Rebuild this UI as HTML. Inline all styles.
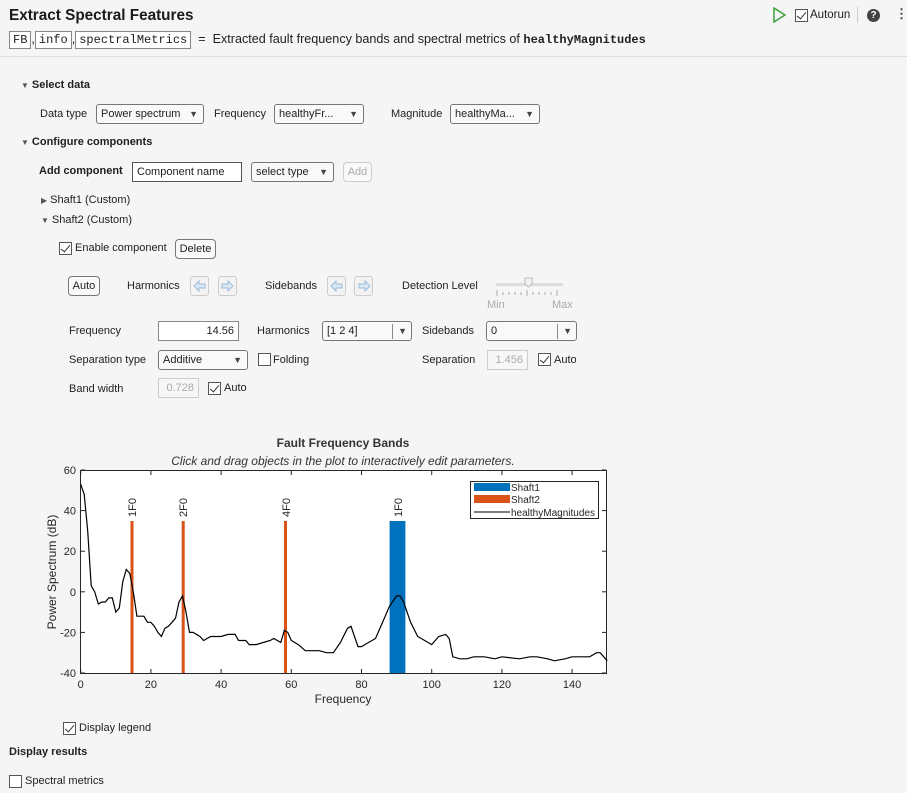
<!DOCTYPE html>
<html><head><meta charset="utf-8"><style>
*{box-sizing:border-box}
body{margin:0;width:907px;height:793px;background:#f5f5f5;font-family:"Liberation Sans",sans-serif;font-size:11px;color:#212121;position:relative;overflow:hidden}
.a{position:absolute;white-space:nowrap}
.b{font-weight:bold}
.mono{font-family:"Liberation Mono",monospace}
.dd{position:absolute;height:20px;border:1px solid #777;border-radius:3px;background:#f9f9f9;padding:2px 4px;line-height:15px}
.dd:after{content:"▼";position:absolute;right:5px;top:2px;font-size:9px;color:#444}
.dd.sep:after{border-left:1px solid #888;padding-left:5px;right:4px}
.tb{position:absolute;height:20px;border:1px solid #888;background:#fff;padding:2px 4px;line-height:15px}
.btn{position:absolute;height:20px;border:1px solid #777;border-radius:4px;background:#f9f9f9;line-height:18px;text-align:center}
.cb{position:absolute;width:13px;height:13px;border:1px solid #555;background:#fff}
.cb.c:after{content:"";position:absolute;left:3px;top:0px;width:4px;height:8px;border:solid #333;border-width:0 1.3px 1.3px 0;transform:rotate(40deg)}
.ab{position:absolute;width:19px;height:20px;border:1px solid #ccc;border-radius:3px;background:#f3f3f3}
.tri{display:inline-block;font-size:8px;color:#555;margin-right:3px}
</style></head><body>
<div class="a b" style="left:9px;top:7px;font-size:15.3px;color:#1a1a1a">Extract Spectral Features</div>
<div class="a" style="left:9px;top:30px;height:20px;line-height:18px;font-size:12.6px">
<span class="mono" style="border:1px solid #888;background:#fff;padding:1px 3px;font-size:12px">FB</span>,<span class="mono" style="border:1px solid #888;background:#fff;padding:1px 3px;font-size:12px">info</span>,<span class="mono" style="border:1px solid #888;background:#fff;padding:1px 3px;font-size:12px">spectralMetrics</span>&nbsp; = &nbsp;Extracted fault frequency bands and spectral metrics of <span class="mono b" style="font-size:12px">healthyMagnitudes</span></div>
<svg class="a" style="left:772px;top:7px" width="14" height="16"><path d="M2 1 L13 8 L2 15 Z" fill="none" stroke="#3ca03c" stroke-width="1.5"/></svg>
<div class="cb c" style="left:795px;top:9px"></div>
<div class="a" style="left:810px;top:9px;font-size:11.5px">Autorun</div>
<div class="a" style="left:857px;top:7px;width:1px;height:16px;background:#ccc"></div>
<div class="a" style="left:867px;top:9px;width:13px;height:13px;border-radius:50%;background:#444;color:#fff;font-size:10px;font-weight:bold;text-align:center;line-height:13px">?</div>
<div class="a b" style="left:895px;top:6px;font-size:13px;color:#444">⋮</div>
<div class="a" style="left:0;top:56px;width:907px;height:1px;background:#ddd"></div>

<div class="a b" style="left:21px;top:79px"><span class="tri">▼</span>Select data</div>
<div class="a" style="left:40px;top:108px">Data type</div>
<div class="dd" style="left:96px;top:104px;width:108px">Power spectrum</div>
<div class="a" style="left:214px;top:108px">Frequency</div>
<div class="dd" style="left:274px;top:104px;width:90px">healthyFr...</div>
<div class="a" style="left:391px;top:108px">Magnitude</div>
<div class="dd" style="left:450px;top:104px;width:90px">healthyMa...</div>

<div class="a b" style="left:21px;top:136px"><span class="tri">▼</span>Configure components</div>
<div class="a b" style="left:39px;top:165px">Add component</div>
<div class="tb" style="left:132px;top:162px;width:110px;border-color:#555">Component name</div>
<div class="dd" style="left:251px;top:162px;width:83px">select type</div>
<div class="btn" style="left:343px;top:162px;width:29px;border-color:#ccc;color:#aaa">Add</div>
<div class="a" style="left:41px;top:194px"><span class="tri">▶</span>Shaft1 (Custom)</div>
<div class="a" style="left:41px;top:214px"><span class="tri">▼</span>Shaft2 (Custom)</div>

<div class="cb c" style="left:59px;top:242px"></div>
<div class="a" style="left:75px;top:242px">Enable component</div>
<div class="btn" style="left:175px;top:239px;width:41px">Delete</div>

<div class="btn" style="left:68px;top:276px;width:32px">Auto</div>
<div class="a" style="left:127px;top:280px">Harmonics</div>
<div class="ab" style="left:190px;top:276px"></div>
<div class="ab" style="left:218px;top:276px"></div>
<div class="a" style="left:265px;top:280px">Sidebands</div>
<div class="ab" style="left:327px;top:276px"></div>
<div class="ab" style="left:354px;top:276px"></div>
<svg class="a" style="left:190px;top:276px" width="190" height="20">
<g fill="#dbe8f5" stroke="#9bbbd8" stroke-width="1"><path d="M4 10 L9 5 L9 8 L15 8 L15 12 L9 12 L9 15Z"/><path d="M43 10 L38 5 L38 8 L32 8 L32 12 L38 12 L38 15Z"/><path d="M141 10 L146 5 L146 8 L152 8 L152 12 L146 12 L146 15Z"/><path d="M180 10 L175 5 L175 8 L169 8 L169 12 L175 12 L175 15Z"/></g></svg>
<div class="a" style="left:402px;top:280px">Detection Level</div>
<div class="a" style="left:496px;top:283px;width:67px;height:3px;background:#ddd"></div>
<svg class="a" style="left:490px;top:276px" width="80" height="24"><path d="M35 2 L42 2 L42 8 L38.5 11 L35 8Z" fill="#f3f3f3" stroke="#bbb"/><g stroke="#aaa"><path d="M7 14V20M13 16V19M19 16V19M25 16V19M31 16V19M37 14V20M43 16V19M49 16V19M55 16V19M61 16V19M67 14V20"/></g></svg>
<div class="a" style="left:487px;top:299px;color:#aaa;font-size:11px">Min</div>
<div class="a" style="left:552px;top:299px;color:#aaa;font-size:11px">Max</div>

<div class="a" style="left:69px;top:325px">Frequency</div>
<div class="tb" style="left:158px;top:321px;width:81px;text-align:right">14.56</div>
<div class="a" style="left:257px;top:325px">Harmonics</div>
<div class="dd sep" style="left:322px;top:321px;width:90px">[1 2 4]</div>
<div class="a" style="left:422px;top:325px">Sidebands</div>
<div class="dd sep" style="left:486px;top:321px;width:91px">0</div>

<div class="a" style="left:69px;top:354px">Separation type</div>
<div class="dd" style="left:158px;top:350px;width:90px">Additive</div>
<div class="cb" style="left:258px;top:353px"></div>
<div class="a" style="left:273px;top:354px">Folding</div>
<div class="a" style="left:422px;top:354px">Separation</div>
<div class="tb" style="left:487px;top:350px;width:41px;text-align:right;color:#aaa;border-color:#ccc;background:#f7f7f7">1.456</div>
<div class="cb c" style="left:538px;top:353px"></div>
<div class="a" style="left:554px;top:354px">Auto</div>

<div class="a" style="left:69px;top:383px">Band width</div>
<div class="tb" style="left:158px;top:378px;width:41px;text-align:right;color:#aaa;border-color:#ccc;background:#f7f7f7">0.728</div>
<div class="cb c" style="left:208px;top:382px"></div>
<div class="a" style="left:224px;top:382px">Auto</div>

<svg class="a" style="left:0;top:430px" width="620" height="280" font-family="Liberation Sans,sans-serif">
<g transform="translate(0,-430)">
<text x="343" y="447" text-anchor="middle" font-size="12" font-weight="bold" fill="#333">Fault Frequency Bands</text>
<text x="343" y="465" text-anchor="middle" font-size="12" font-style="italic" fill="#333">Click and drag objects in the plot to interactively edit parameters.</text>
<rect x="80.5" y="470.5" width="526" height="203" fill="#fff" stroke="#262626"/>
<g id="ticks" stroke="#262626"></g>
<g font-size="11" fill="#262626" id="lbl"></g>
<text x="343" y="703" text-anchor="middle" font-size="12" fill="#262626">Frequency</text>
<text transform="translate(56,572) rotate(-90)" text-anchor="middle" font-size="12" fill="#262626">Power Spectrum (dB)</text>
<rect x="130.5" y="521" width="3" height="152" fill="#d95319"/>
<rect x="181.7" y="521" width="3" height="152" fill="#d95319"/>
<rect x="284" y="521" width="3" height="152" fill="#d95319"/>
<rect x="389.6" y="521" width="15.8" height="152" fill="#0072bd"/>
<g font-size="11" fill="#262626">
<text transform="translate(136,517) rotate(-90)">1F0</text>
<text transform="translate(187,517) rotate(-90)">2F0</text>
<text transform="translate(290,517) rotate(-90)">4F0</text>
<text transform="translate(402,517) rotate(-90)">1F0</text>
</g>
<polyline id="curve" fill="none" stroke="#000" stroke-width="1.2"/>
<rect x="470.5" y="481.5" width="128" height="37" fill="#fff" stroke="#262626"/>
<rect x="474" y="483" width="36" height="8" fill="#0072bd"/>
<rect x="474" y="495" width="36" height="8" fill="#d95319"/>
<line x1="474" y1="512" x2="510" y2="512" stroke="#333" stroke-width="1.2"/>
<g font-size="10" fill="#262626"><text x="511" y="491">Shaft1</text><text x="511" y="503">Shaft2</text><text x="511" y="516">healthyMagnitudes</text></g>
</g></svg>

<div class="cb c" style="left:63px;top:722px"></div>
<div class="a" style="left:79px;top:722px">Display legend</div>
<div class="a b" style="left:9px;top:746px">Display results</div>
<div class="cb" style="left:9px;top:775px"></div>
<div class="a" style="left:25px;top:775px">Spectral metrics</div>

<script>
var X=f=>80.7+3.51*f, Y=d=>470+(60-d)*2.03;
var p=[[0,53],[1,48],[2,30],[3,3],[4,0],[5,-6],[6,-5],[7,-5],[8,-3],[9,-3],[10,-10],[11,-8],[12,5],[13,11],[14,9],[15,0],[16,-12],[17,-12],[18,-12],[19,-15],[20,-15],[21,-17],[22,-20],[23,-22],[24,-18],[25,-17],[26,-15],[27,-13],[28,-5],[29,-2],[30,-10],[31,-20],[32,-20],[34,-22],[35,-24],[37,-22],[40,-22],[42,-21],[44,-21],[45,-24],[47,-24],[48,-26],[50,-26],[52,-25],[54,-24],[55,-23],[57,-25],[58,-19],[59,-20],[60,-24],[62,-26],[64,-29],[66,-29],[68,-29],[70,-30],[72,-30],[74,-25],[76,-18],[77,-17],[78,-22],[79,-27],[80,-27],[82,-25],[84,-23],[86,-15],[88,-7],[90,-2],[91,-2],[92,-5],[94,-15],[96,-22],[98,-24],[100,-26],[102,-22],[104,-21],[105,-23],[106,-32],[108,-33],[110,-33],[112,-32],[115,-32],[118,-33],[120,-32],[125,-33],[128,-32],[130,-32],[133,-33],[135,-34],[138,-33],[140,-32],[145,-32],[147,-30],[148,-30],[150,-34]];
document.getElementById('curve').setAttribute('points',p.map(a=>X(a[0]).toFixed(1)+','+Y(a[1]).toFixed(1)).join(' '));
var t='',l='';
for(var f=0;f<=140;f+=20){var x=X(f);t+='<line x1="'+x+'" y1="673" x2="'+x+'" y2="669"/><line x1="'+x+'" y1="471" x2="'+x+'" y2="475"/>';l+='<text x="'+x+'" y="688" text-anchor="middle">'+f+'</text>';}
for(var d=-40;d<=60;d+=20){var y=Y(d);t+='<line x1="81" y1="'+y+'" x2="85" y2="'+y+'"/><line x1="606" y1="'+y+'" x2="602" y2="'+y+'"/>';l+='<text x="76" y="'+(y+4)+'" text-anchor="end">'+d+'</text>';}
document.getElementById('ticks').innerHTML=t;document.getElementById('lbl').innerHTML=l;
</script>
</body></html>
